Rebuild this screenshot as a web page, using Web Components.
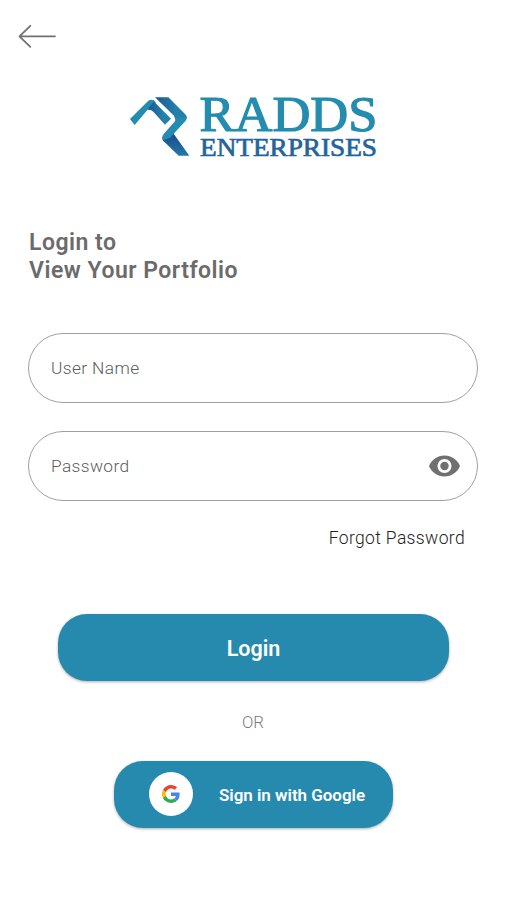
<!DOCTYPE html>
<html lang="en"><head><meta charset="utf-8"><title>Login</title>
<style>html,body{margin:0;background:#fff}body{font-family:Roboto,"Noto Sans",sans-serif;width:506px;height:900px;overflow:hidden}</style></head>
<body><login-screen></login-screen>
<script>
const define=(name,html)=>customElements.define(name,class extends HTMLElement{
  constructor(){super();this.attachShadow({mode:'open'}).innerHTML=html;}
});
define('back-arrow',`<style>:host{display:block;height:26px;width:40px}svg{display:block}</style>
<svg width="40" height="26" fill="none" stroke="#717171" stroke-width="1.8" stroke-linecap="round" stroke-linejoin="round"><path d="M12.3 2.8L1.5 13.3L12.3 23.8M1.5 13.3H37"/></svg>`);
define('brand-logo',`<style>:host{display:block;width:260px;height:84px}svg{display:block}text{font-family:"Liberation Serif",serif}</style>
<svg width="260" height="84" viewBox="0 -10 260 84">
<defs><linearGradient id="b" x1="0" y1="0" x2="1" y2="0"><stop stop-color="#1c5594"/><stop offset=".65" stop-color="#2380a9"/></linearGradient>
<linearGradient id="c" x1="0" y1="0" x2="0" y2="1"><stop offset=".1" stop-color="#1d4f90"/><stop offset="1" stop-color="#2278a7"/></linearGradient></defs>
<g transform="translate(-6 -6) scale(.33333)">
<path fill="#238caf" d="M30 102L85 47Q92 42 102 46L108 54L82 75L44 120Z"/>
<path fill="url(#b)" d="M82 75L101 49L153 101L135 119L100 80Q92 73 82 75Z"/>
<path fill="url(#b)" d="M105 37H145L198 90Q203 96 198 103L180 121L165 101L162 92Z"/>
<path fill="#238caf" d="M165 99L201 96Q201 104 193 112L163 144L153 184L128 166Q123 158 131 147L163 111Q169 105 165 99Z"/>
<path fill="url(#c)" d="M161 146L208 212H176L128 166L151 158Z"/>
</g>
<text x="73.5" y="40.3" font-size="50.5" textLength="178" lengthAdjust="spacingAndGlyphs" fill="#238caf" stroke="#238caf" stroke-width="1.2">RADDS</text>
<text x="74" y="64.5" font-size="26.2" textLength="177" lengthAdjust="spacingAndGlyphs" fill="#24649c" stroke="#24649c" stroke-width=".7">ENTERPRISES</text>
</svg>`);
define('page-heading',`<style>:host{display:block;color:#6b6b6b;font-size:23px;line-height:27.5px;font-weight:600;letter-spacing:.5px;white-space:nowrap}</style><slot></slot>`);
define('text-field',`<style>:host{display:flex;box-sizing:border-box;width:450px;height:70px;border:1.4px solid #a0a0a0;border-radius:35px;align-items:center;justify-content:space-between;padding:0 17px 0 22px;color:#5c5c5c;font-size:17.3px;font-weight:350;letter-spacing:.4px}span{padding-bottom:1px}</style><span><slot></slot></span><slot name="icon"></slot>`);
define('eye-icon',`<style>:host{display:block;width:31px;height:22px}svg{display:block}</style><svg width="31" height="22" viewBox="1 4.2 22 15.6" preserveAspectRatio="none"><path fill="#707070" d="M12 4.5C7 4.5 2.73 7.61 1 12c1.73 4.39 6 7.5 11 7.5s9.27-3.11 11-7.5c-1.73-4.39-6-7.5-11-7.5zM12 17a5 5 0 1 1 0-10 5 5 0 0 1 0 10zm0-8a3 3 0 1 0 0 6 3 3 0 0 0 0-6z"/></svg>`);
define('action-button',`<style>:host{display:flex;box-sizing:border-box;align-items:center;justify-content:center;background:#268aae;color:#fff;border-radius:29px;box-shadow:0 1px 3px rgba(0,0,0,.32);height:67px;font-weight:600;white-space:nowrap}</style><slot name="icon"></slot><span><slot></slot></span>`);
define('google-mark',`<style>:host{display:grid;place-items:center;width:44px;height:44px;border-radius:50%;background:#fff}svg{display:block}</style><svg width="18" height="18" viewBox="0 0 48 48"><path fill="#EA4335" d="M24 9.5c3.54 0 6.71 1.22 9.21 3.6l6.85-6.85C35.9 2.38 30.47 0 24 0 14.62 0 6.51 5.38 2.56 13.22l7.98 6.19C12.43 13.72 17.74 9.5 24 9.5z"/><path fill="#4285F4" d="M46.98 24.55c0-1.57-.15-3.09-.38-4.55H24v9.02h12.94c-.58 2.96-2.26 5.48-4.78 7.18l7.73 6c4.51-4.18 7.09-10.36 7.09-17.65z"/><path fill="#FBBC05" d="M10.53 28.59A14.5 14.5 0 0 1 10.53 19.41l-7.98-6.19a24 24 0 0 0 0 21.56l7.98-6.19z"/><path fill="#34A853" d="M24 48c6.48 0 11.93-2.13 15.89-5.81l-7.73-6c-2.15 1.45-4.92 2.3-8.16 2.3-6.26 0-11.57-4.22-13.47-9.91l-7.98 6.19C6.51 42.62 14.62 48 24 48z"/></svg>`);
define('login-screen',`<style>
:host{display:flex;flex-direction:column;box-sizing:border-box;width:506px;height:900px;padding:23px 28px 0}
back-arrow{margin-left:-10px}brand-logo{margin:32px 0 0 98px}page-heading{margin:64px 0 49px 1px}
.fields{display:grid;gap:28px}.forgot{align-self:flex-end;margin:27px 13px 0 0;font-size:17.5px;line-height:20px;letter-spacing:.36px;font-weight:350;color:#222}
.login{width:391px;margin:66px 0 0 30px;font-size:21.5px;padding-top:2px}
.or{margin:31px 0 0 214px;font-size:16.8px;line-height:20px;font-weight:350;color:#7b7b7b}
.google{width:279px;margin:29px 0 0 86px;justify-content:flex-start;padding-left:35px;font-size:17px;letter-spacing:-.04px}
google-mark{margin:0 26px 2px 0}
</style>
<back-arrow></back-arrow><brand-logo></brand-logo>
<page-heading>Login to<br>View Your Portfolio</page-heading>
<div class="fields"><text-field>User Name</text-field><text-field>Password<eye-icon slot="icon"></eye-icon></text-field></div>
<div class="forgot">Forgot Password</div>
<action-button class="login">Login</action-button>
<div class="or">OR</div>
<action-button class="google"><google-mark slot="icon"></google-mark>Sign in with Google</action-button>`);
</script></body></html>
